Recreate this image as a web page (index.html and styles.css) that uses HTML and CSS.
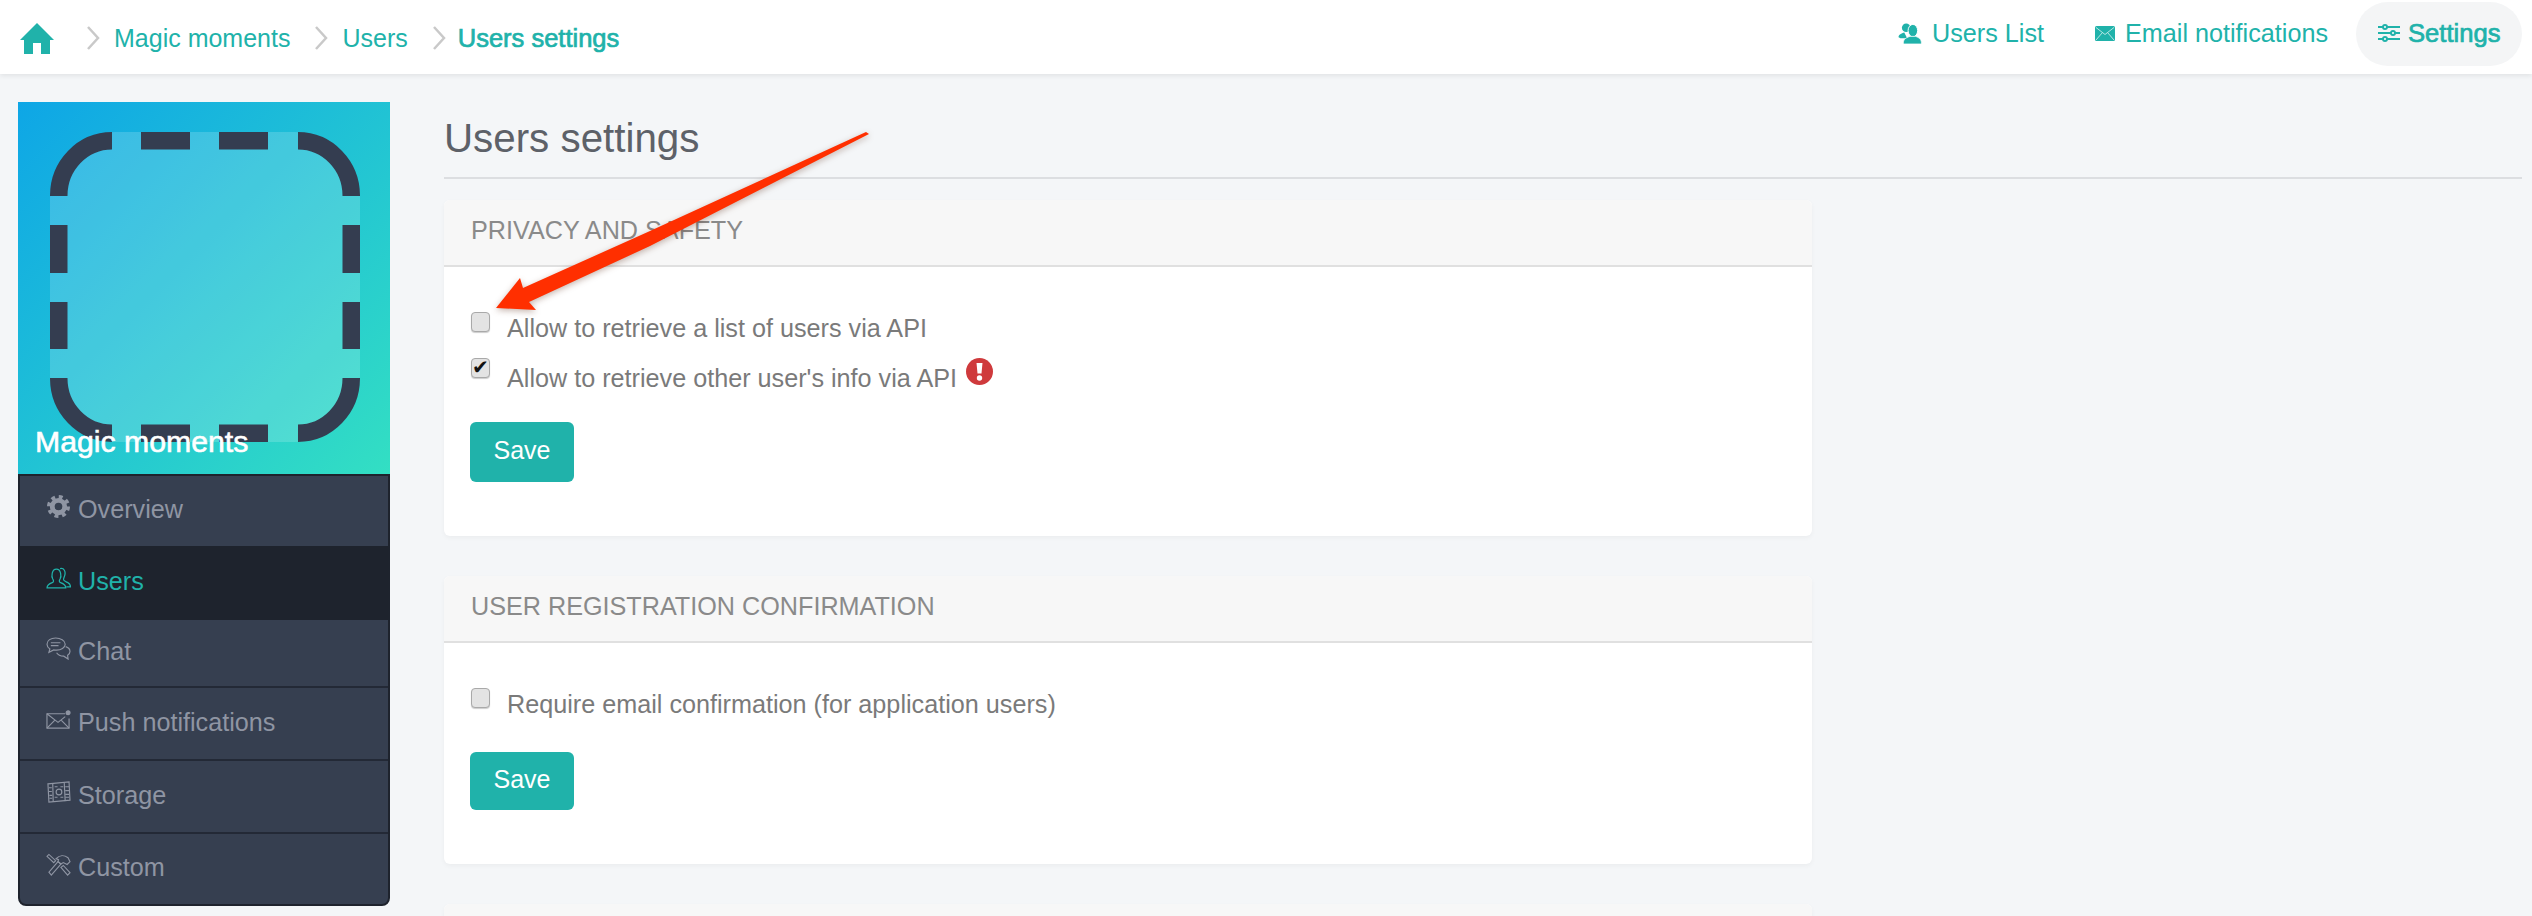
FILE: index.html
```html
<!DOCTYPE html>
<html lang="en">
<head>
  <meta charset="UTF-8" />
  <title>Users settings</title>
  <link rel="stylesheet" href="styles.css">
</head>
<body>

  <header class="topbar">
    <nav class="crumbs">
      <svg class="home-icon" viewBox="0 0 34 31"><path fill="#20b2aa" d="M17 0 34 17H30V31H21V20H13V31H4V17H0Z"/></svg>
      <svg class="chevron" viewBox="0 0 14 24"><path d="M2 1 12 12 2 23"/></svg>
      <a class="crumb">Magic moments</a>
      <svg class="chevron" viewBox="0 0 14 24"><path d="M2 1 12 12 2 23"/></svg>
      <a class="crumb">Users</a>
      <svg class="chevron" viewBox="0 0 14 24"><path d="M2 1 12 12 2 23"/></svg>
      <a class="crumb current">Users settings</a>
    </nav>
    <nav class="tabs">
      <a class="tab">
        <svg class="tab-icon" viewBox="0 0 24 22" fill="#20b2aa"><circle cx="8" cy="5" r="4.5"/><path d="M0 15c0-3 3-4 6-5l3 6H2z"/><ellipse cx="15" cy="8" rx="5" ry="6.5" stroke="#fff"/><path d="M5 22c0-4 1-6 7-8h6c5 2 6 4 6 8z" stroke="#fff" stroke-width=".8"/></svg>
        Users List
      </a>
      <a class="tab tab-mail">
        <svg class="mail-icon" viewBox="0 0 20 15"><rect width="20" height="15" rx="1.5" fill="#20b2aa"/><path d="M1 1.5 10 8.5 19 1.5M1 14 7.5 6.5M19 14 12.5 6.5" fill="none" stroke="#b5e6e3"/></svg>
        Email notifications
      </a>
      <a class="tab active-tab">
        <svg class="sliders-icon" viewBox="0 0 22 18" fill="#fff" stroke="#20b2aa" stroke-width="2"><path d="M0 3H22M0 9H22M0 15H22"/><circle cx="7" cy="3" r="2"/><circle cx="15" cy="9" r="2"/><circle cx="7" cy="15" r="2"/></svg>
        Settings
      </a>
    </nav>
  </header>

  <div class="layout">
    <aside class="sidebar">
      <div class="app-logo">
        <svg class="logo-shape" viewBox="0 0 310 310" fill="none" stroke="#343d50" stroke-width="17.5">
          <rect width="310" height="310" rx="66" fill="#fff" fill-opacity=".17" stroke="none"/>
          <path d="M62 8.750A53.250 55 0 0 0 8.750 64M248 8.750A53.250 55 0 0 1 301.250 64M62 301.250A53.250 55 0 0 1 8.750 246M248 301.250A53.250 55 0 0 0 301.250 246"/>
          <path d="M91 8.750H140M169 8.750H218M91 301.250H140M169 301.250H218M8.750 93V141M8.750 170V217M301.250 93V141M301.250 170V217"/>
        </svg>
        <div class="app-name">Magic moments</div>
      </div>
      <ul class="menu">
        <li class="menu-item">
          <svg class="menu-icon" viewBox="0 0 24 24"><circle cx="12" cy="12" r="6.500" stroke-width="5"/><circle cx="12" cy="12" r="10" stroke-width="4" stroke-dasharray="4 3.850"/></svg>
          Overview
        </li>
        <li class="menu-item active">
          <svg class="menu-icon" viewBox="0 0 24 22"><path d="M1 20c0-3 2-4 5-5 1.500-.5 1.500-2 .5-3.500C5 9 5.500 2 10 2s5 7 3.500 9.500c-1 1.500-1 3 .5 3.500 3 1 5 2 5 5z"/><path d="M13.500 1.500c4-1 5.500 3 4.500 6.500-.5 2-1.500 3-1 4.500.5 1 2 1.500 4 2.500 1.500.8 2.500 1.800 2.500 4h-4"/></svg>
          Users
        </li>
        <li class="menu-item short">
          <svg class="menu-icon" viewBox="0 0 26 24"><path d="M10 1C5 1 1 3.500 1 7.500c0 2 1 3.500 3 5l-1 3.500 5-2.500c1 .2 1.500.2 3 .2 4.500 0 9-2.500 9-6.200S15 1 10 1z"/><path d="M5 6h10M5 9h8"/><path d="M20.500 10c3 1 4.500 3 4.500 5s-1 3-2.500 4l.5 4-4.500-3c-3 0-6-1-7.500-3.500"/></svg>
          Chat
        </li>
        <li class="menu-item">
          <svg class="menu-icon" viewBox="0 0 26 20"><path d="M20 4H1v15h23V9"/><path d="M1 4l11.500 9L20 7M1 19l8-8M24 19l-8-8"/><circle cx="23" cy="3" r="2" fill="#8f95a3"/></svg>
          Push notifications
        </li>
        <li class="menu-item">
          <svg class="menu-icon" viewBox="0 0 26 24"><path d="M2 3 24 1 25 20 3 22Z"/><path d="M7 3l.5 19M19 2l1 19" /><circle cx="13.500" cy="11.500" r="3"/><path d="M3 7h3M3 11h3M3.500 15h3M3.500 18h3M20 6h4M20 10h4M20 14h4M20 17h4M9 6h3M15 6h3M9 17h3M15 17h3" /></svg>
          Storage
        </li>
        <li class="menu-item">
          <svg class="menu-icon tools" viewBox="0 0 26 24"><path d="M3 20 5.500 23 15.500 11.500 12.500 9Z"/><path d="M10.500 6C14 2 19 2 23 5L25 9 22 12 18 10 15.500 11.500 12.500 9 13 7Z"/><path d="M1 3.500 3 1.500 10 8 8 10ZM15.500 15 18 13 25 20.500 22.500 23Z"/></svg>
          Custom
        </li>
      </ul>
    </aside>

    <main class="content">
      <h1 class="page-title">Users settings</h1>

      <section class="card">
        <h2 class="card-head">Privacy and safety</h2>
        <form class="card-body">
          <label class="check-row">
            <input type="checkbox" class="check">
            <span>Allow to retrieve a list of users via API</span>
          </label>
          <label class="check-row">
            <input type="checkbox" class="check" checked>
            <span>Allow to retrieve other user's info via API</span>
            <svg class="alert-icon" viewBox="0 0 27 27"><circle cx="13.500" cy="13.500" r="13.500" fill="#cf3a3c"/><path d="M10.500 5h6l-1 10.500h-4z" fill="#fff"/><circle cx="13.500" cy="20" r="2.700" fill="#fff"/></svg>
          </label>
          <button type="button" class="save-btn">Save</button>
        </form>
      </section>

      <section class="card">
        <h2 class="card-head">User registration confirmation</h2>
        <form class="card-body">
          <label class="check-row">
            <input type="checkbox" class="check">
            <span>Require email confirmation (for application users)</span>
          </label>
          <button type="button" class="save-btn second">Save</button>
        </form>
      </section>

      <section class="card">
        <div class="card-head"></div>
      </section>
    </main>
  </div>

  <!-- flecha encima de la tarjeta -->
  <svg class="arrow" viewBox="0 0 2532 916">
    <path fill="#ff2f00" d="M496 308 520 278 523 288 650 231 866 132 869 134 650 246 529 302 536 310Z"/>
  </svg>

</body>
</html>
```

FILE: styles.css
```css
/* Base */
html, body {
  height: 916px;
  overflow: hidden;
}

body {
  background-color: #f4f6f8;
  font-family: "Liberation Sans", Arial, sans-serif;
  margin: 0;
  color: #7a7a7a;
  position: relative;
}

/* Barra superior */
.topbar {
  height: 74px;
  background-color: white;
  box-shadow: 0 2px 5px rgba(0, 0, 0, 0.08);
  display: flex;
  justify-content: space-between;
  padding: 0 10px 0 20px;
  box-sizing: border-box;
  position: relative;
}

.crumbs {
  display: flex;
  align-items: center;
  font-size: 25px;
  color: #20b2aa;
  padding-top: 2px;
}

.home-icon {
  width: 34px;
  height: 31px;
  margin-right: 32px;
}

.chevron {
  width: 14px;
  height: 24px;
  fill: none;
  stroke: #c9c9c9;
  stroke-width: 2.5;
  margin-right: 14px;
}

.crumb {
  margin-right: 24px;
}

.current {
  font-size: 25.500px;
  margin-left: -2px;
  -webkit-text-stroke: 0.7px #20b2aa;
}

.tabs {
  display: flex;
  align-items: flex-start;
  padding-top: 2px;
  font-size: 25.200px;
  color: #20b2aa;
}

.tab {
  display: flex;
  align-items: center;
  gap: 10px;
  height: 64px;
  padding-bottom: 2px;
  box-sizing: border-box;
  margin-right: 51px;
}

.tab-mail {
  margin-right: 28px;
}

.tab-icon {
  width: 24px;
  height: 21px;
}

.mail-icon {
  width: 20px;
  height: 15px;
}

.sliders-icon {
  width: 22px;
  height: 18px;
}

.active-tab {
  margin-right: 0;
  width: 166px;
  padding-left: 22px;
  gap: 8px;
  font-size: 25.600px;
  background-color: #f4f5f6;
  border-radius: 32px;
  -webkit-text-stroke: 0.7px #20b2aa;
}

/* Columnas */
.layout {
  display: flex;
  gap: 54px;
  height: 842px;
  padding: 28px 10px 0 18px;
  box-sizing: border-box;
  overflow: hidden;
}

.sidebar {
  width: 372px;
  flex-shrink: 0;
}

.app-logo {
  position: relative;
  height: 372px;
  background: linear-gradient(135deg, #0ea6e6, #33dfc3);
  padding: 30px 0 0 32px;
  box-sizing: border-box;
}

.logo-shape {
  display: block;
  width: 310px;
  height: 310px;
}

.app-name {
  position: absolute;
  left: 17px;
  top: 323px;
  font-size: 30.240px;
  color: white;
  -webkit-text-stroke: 0.6px white;
}

.menu {
  list-style: none;
  margin: 0;
  padding: 0;
  background-color: #363f50;
  border: 2px solid #1e232d;
  border-radius: 0 0 8px 8px;
  color: #8f95a3;
  font-size: 25.200px;
  overflow: hidden;
}

.menu-item {
  display: flex;
  align-items: center;
  gap: 7px;
  height: 73px;
  padding: 0 0 3px 26px;
  box-sizing: border-box;
  border-bottom: 2px solid #232936;
}

.menu-item:first-child {
  height: 70px;
  border-bottom: none;
}

.menu-item:last-child {
  height: 70px;
  border-bottom: none;
}

.menu-item.active {
  height: 74px;
  background-color: #1e232d;
  color: #20b2aa;
  border-bottom: none;
  margin: 0 -2px;
  padding-left: 28px;
}

.menu-item.short {
  height: 68px;
}

.menu-icon {
  width: 25px;
  height: 23px;
  margin-bottom: 6px;
  fill: none;
  stroke: #8f95a3;
  stroke-width: 1.200;
}

.active .menu-icon {
  stroke: #20b2aa;
}

.menu-item:first-child .menu-icon {
  stroke-width: 5;
}

.menu-item:first-child .menu-icon circle + circle {
  stroke-width: 4;
}

/* Contenido */
.content {
  flex: 1;
}

.page-title {
  margin: 0 0 21px;
  height: 77px;
  line-height: 73px;
  font-size: 40.320px;
  font-weight: 400;
  color: #5d6168;
  border-bottom: 2px solid #dcdee1;
  box-sizing: border-box;
}

.card {
  width: 1368px;
  background-color: white;
  border-radius: 6px;
  box-shadow: 0 2px 5px rgba(0, 0, 0, 0.04);
  margin-bottom: 40px;
}

.card-head {
  margin: 0;
  height: 67px;
  line-height: 60px;
  padding-left: 27px;
  box-sizing: border-box;
  font-size: 25.200px;
  font-weight: 400;
  text-transform: uppercase;
  color: #8a8a8a;
  background-color: #f7f7f7;
  border-bottom: 2px solid #e0e0e0;
  border-radius: 6px 6px 0 0;
}

.card-body {
  padding: 36px 27px 54px;
}

.check-row {
  display: flex;
  align-items: flex-start;
  height: 50px;
  line-height: 50px;
  font-size: 25.200px;
  color: #7a7a7a;
}

.check {
  appearance: none;
  width: 19px;
  height: 20px;
  margin: 9px 17px 0 0;
  background-color: #e3e3e3;
  border: 1px solid #a9a9a9;
  border-radius: 4px;
  box-shadow: 0 1px 1px rgba(0, 0, 0, 0.2);
  box-sizing: border-box;
  position: relative;
}

.check-row + .check-row .check {
  margin-top: 5px;
}

.check:checked::before {
  content: "✔";
  position: absolute;
  left: 0;
  top: -2px;
  font: 20px/20px "DejaVu Sans", sans-serif;
  color: #111;
}

.alert-icon {
  width: 27px;
  height: 27px;
  margin: 5px 0 0 9px;
}

.save-btn {
  display: block;
  width: 104px;
  height: 60px;
  margin: 19px 0 0 -1px;
  padding: 0 0 4px;
  border: none;
  border-radius: 6px;
  background-color: #20b2aa;
  color: white;
  font-family: inherit;
  font-size: 25px;
  cursor: pointer;
}

.save-btn.second {
  height: 58px;
  margin-top: 23px;
}

/* Flecha */
.arrow {
  position: absolute;
  left: 0;
  top: 0;
  width: 2532px;
  height: 916px;
  pointer-events: none;
  filter: drop-shadow(0 2px 3px rgba(90, 40, 20, 0.35));
}
```
